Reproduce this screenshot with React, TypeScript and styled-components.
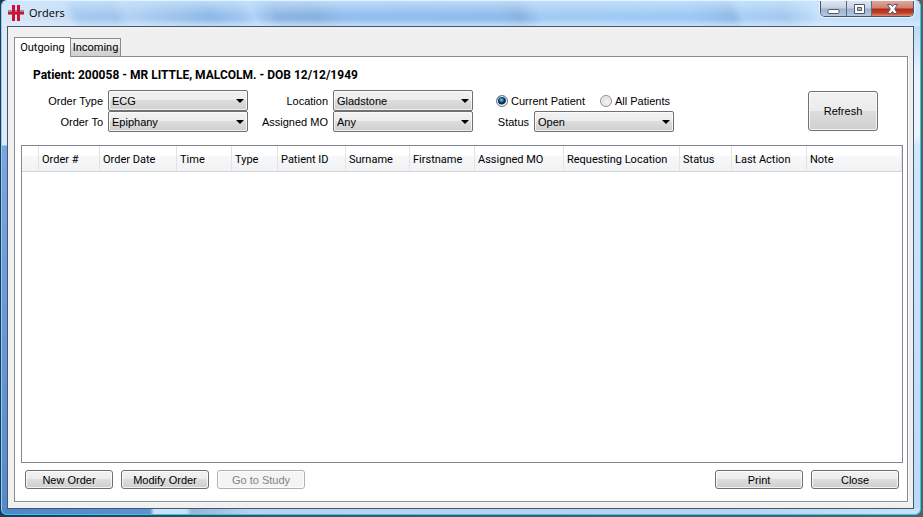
import React, { useId, useState } from "react";
import styled, { createGlobalStyle } from "styled-components";

const ui = `"Liberation Sans", Arial, sans-serif`;
const compact = `Roboto, Tahoma, sans-serif`;

const GlobalStyle = createGlobalStyle`
  *, *::before, *::after { box-sizing: border-box; }
  html, body, #root { height: 100%; }
  body {
    margin: 0;
    overflow: hidden;
    font: 11px/16px ${ui};
    color: #000;
    background: linear-gradient(90deg, #1f3a5c 0, #4a5258 30%, #5c5f60 100%);
  }
`;

const Window = styled.div`
  display: flex;
  flex-direction: column;
  height: calc(100vh - 2px);
  margin: 0 2px 0 1px;
  padding: 0 6px 5px 5px;
  border: 1px solid #23cdf5;
  border-top-color: #e4f2ff;
  border-left-color: #8fd0f0;
  border-radius: 6px;
  background:
    linear-gradient(90deg, #4f86c6 0, #5a92d2 148px, #c5e4fb 152px, #c5e4fb 184px, #93b6d8 190px, #b4d4f2 250px, #b4d4f2 80%, #c5e4fb 100%) 0 100% / 100% 6px no-repeat,
    linear-gradient(180deg, #dceaf8 0, #dceaf8 120px, #7aa6e0 121px, #5488c8 100%) 0 24px / 6px 100% no-repeat,
    linear-gradient(180deg, #b9d9f6 0, #eaf4fd 50px, #eaf4fd 110px, #cfe7ff 121px, #b9d9f6 100%) 100% 24px / 7px 100% no-repeat,
    #a9cff5;
`;

const TitleBar = styled.header`
  display: flex;
  align-items: flex-start;
  height: 25px;
  flex: none;
  margin: 0 -6px 0 -5px;
  padding: 0 6px 0 5px;
  border-radius: 5px 5px 0 0;
  background:
    linear-gradient(180deg, rgba(205,232,255,.7) 0, rgba(200,228,255,0) 14px, rgba(255,255,255,0) 18px, rgba(225,240,255,.6) 100%),
    linear-gradient(70deg, #dbe9f8 0, #c9ddf4 64px, #a9c9ee 74px, #a4c6ed 110px, #b4d2f2 122px, #8fb9e8 200px, #a2c6ee 228px, #b0d3f7 240px, #8fb6e2 262px, #8ab3e0 300px, #94bfee 326px, #90bcec 470px, #8cb4e0 490px, #a3cbf4 510px, #9fc9f4 650px, #93bbe6 690px, #aad0f5 700px, #a5c9ee 740px, #c5e0fa 770px, #c4defa 100%);
`;

const AppIcon = styled.svg`
  width: 16px;
  height: 16px;
  margin: 4px 5px 0 1px;
`;

const Title = styled.h1`
  flex: 1;
  margin: 3px 0 0;
  font: 11px/18px "Open Sans", sans-serif;
`;

const Caption = styled.div`
  display: flex;
  height: 16px;
  border: 1px solid #4a5568;
  border-top: 0;
  border-radius: 0 0 5px 5px;
  overflow: hidden;
  box-shadow: 0 0 1px 1px rgba(255,255,255,.6);
`;

const CaptionButton = styled.button<{ $close?: boolean }>`
  display: flex;
  align-items: center;
  justify-content: center;
  width: ${(p) => (p.$close ? 42 : 25)}px;
  padding: 0;
  border: 0;
  background: ${(p) =>
    p.$close
      ? "linear-gradient(180deg, #e0a79c 0, #d08070 7px, #b02a18 8px, #c2402a 12px, #dd8e70 100%)"
      : "linear-gradient(180deg, #dbe6f2 0, #c4d3e4 7px, #9db3ce 8px, #b4c9e0 100%)"};
  & + & { border-left: 1px solid #5a6a80; }
`;

const Client = styled.main`
  flex: 1;
  display: flex;
  flex-direction: column;
  min-height: 0;
  padding: 10px 5px 6px 6px;
  border: 1px solid #46566c;
  background: #f0f0f0;
`;

const TabList = styled.div`
  display: flex;
  align-items: flex-end;
  height: 19px;
  flex: none;
`;

const Tab = styled.button<{ $active?: boolean }>`
  position: relative;
  height: ${(p) => (p.$active ? 20 : 18)}px;
  width: ${(p) => (p.$active ? 57 : 51)}px;
  margin: ${(p) => (p.$active ? "0 0 -1px" : "0 0 0 -1px")};
  z-index: ${(p) => (p.$active ? 1 : 0)};
  padding: 0;
  border: 1px solid #898c95;
  border-bottom: 0;
  background: ${(p) => (p.$active ? "#fff" : "linear-gradient(180deg, #f2f2f2 0, #ebebeb 50%, #dcdcdc 50%, #cfcfcf 100%)")};
  font: 11px/18px ${compact};
  color: #000;
`;

const Panel = styled.section`
  flex: 1;
  display: flex;
  flex-direction: column;
  min-height: 0;
  padding: 10px 4px 12px 6px;
  border: 1px solid #898c95;
  background: #fff;
  box-shadow: 1px 1px 0 #fafafa;
`;

const Patient = styled.h2`
  margin: 0 0 7px 12px;
  font: bold 12px/16px ${compact};
`;

const Filters = styled.form`
  display: flex;
  align-items: flex-start;
  margin: 0 25px 13px 0;
`;

const FieldGrid = styled.div<{ $label: number }>`
  display: grid;
  grid-template-columns: ${(p) => p.$label}px 140px;
  grid-auto-rows: 21px;
  column-gap: 5px;
  align-items: center;
`;

const FieldLabel = styled.label`
  text-align: right;
  white-space: nowrap;
`;

const SelectBox = styled.div`
  display: grid;
  align-items: center;
  & > * { grid-area: 1 / 1; }
  & > svg { justify-self: end; margin-right: 4px; pointer-events: none; }
`;

const bevel = "linear-gradient(180deg, #f2f2f2 0, #ebebeb 50%, #dddddd 50%, #cfcfcf 100%)";

const Select = styled.select`
  appearance: none;
  width: 100%;
  height: 21px;
  padding: 0 16px 0 3px;
  border: 1px solid #707070;
  border-radius: 2px;
  background: ${bevel};
  box-shadow: inset 0 0 0 1px rgba(255,255,255,.7);
  font: 11px/16px ${ui};
  color: #000;
`;

const Radios = styled.div`
  grid-column: 1 / -1;
  display: flex;
  gap: 15px;
  padding-left: 23px;
`;

const RadioLabel = styled.label`
  display: flex;
  align-items: center;
  gap: 3px;
  white-space: nowrap;
`;

const Radio = styled.input`
  appearance: none;
  width: 12px;
  height: 12px;
  margin: 0;
  border: 1px solid #8a8f94;
  border-radius: 50%;
  background: radial-gradient(circle at 60% 60%, #f6f6f6 0, #d4d6d8 80%);
  box-shadow: inset 0 0 0 1px #f4f4f4;
  &:checked {
    border-color: #6c7a86;
    background: radial-gradient(circle at 45% 40%, #7fd0f0 0, #1c6fa0 2px, #0b2c4c 3px, #0b2c4c 4px, #dfe5ea 5px);
  }
`;

const Button = styled.button<{ $large?: boolean }>`
  width: ${(p) => (p.$large ? 70 : 88)}px;
  height: ${(p) => (p.$large ? 40 : 19)}px;
  padding: 0;
  border: 1px solid #707070;
  border-radius: 3px;
  background: ${bevel};
  box-shadow: inset 0 0 0 1px rgba(255,255,255,.75);
  font: 11px/16px ${ui};
  color: #000;
  &:disabled { border-color: #adb2b5; background: #f4f4f4; color: #838383; }
`;

const Refresh = styled(Button)`
  margin: 1px 0 0 auto;
`;

const ListView = styled.div`
  flex: 1;
  min-height: 0;
  border: 1px solid #828790;
  background: #fff;
`;

const Table = styled.table`
  width: 100%;
  table-layout: fixed;
  border-collapse: separate;
  border-spacing: 0;
`;

const HeadCell = styled.th<{ $w?: number }>`
  width: ${(p) => (p.$w ? `${p.$w}px` : "auto")};
  height: 26px;
  padding: 3px 0 0 3px;
  border-right: 1px solid #e2e3ea;
  border-bottom: 1px solid #d5d5d5;
  background: linear-gradient(180deg, #fff 0, #fff 9px, #f7f8fa 10px, #f1f2f4 100%);
  font: 11px/16px ${compact};
  text-align: left;
  white-space: nowrap;
`;

const Footer = styled.footer`
  display: flex;
  gap: 8px;
  margin: 7px 4px 0;
`;

const Spacer = styled.div`
  flex: 1;
`;

const columns: [string, number?][] = [
  ["", 17], ["Order #", 61], ["Order Date", 77], ["Time", 55], ["Type", 46],
  ["Patient ID", 68], ["Surname", 64], ["Firstname", 65], ["Assigned MO", 89],
  ["Requesting Location", 116], ["Status", 52], ["Last Action", 75], ["Note"],
];

function Field({ label, options }: { label: string; options: string[] }) {
  const id = useId();
  return (
    <>
      <FieldLabel htmlFor={id}>{label}</FieldLabel>
      <SelectBox>
        <Select id={id}>
          {options.map((o) => <option key={o}>{o}</option>)}
        </Select>
        <svg width="8" height="4" viewBox="0 0 8 4" aria-hidden="true">
          <path d="M0 0h8L4 4z" fill="#000" />
        </svg>
      </SelectBox>
    </>
  );
}

export default function App() {
  const [scope, setScope] = useState("current");
  return (
    <>
      <GlobalStyle />
      <Window>
        <TitleBar>
          <AppIcon viewBox="0 0 16 16" aria-hidden="true">
            <path d="M0 5h16v5H0z" fill="#a08a94" />
            <path d="M4 0h3v16H4zM9 0h3v16H9z" fill="#d0103a" />
            <path d="M0 7h16v2H0z" fill="#d0103a" />
          </AppIcon>
          <Title>Orders</Title>
          <Caption>
            <CaptionButton aria-label="Minimize">
              <svg width="13" height="14" viewBox="0 0 13 14">
                <rect x="1" y="7.500" width="11" height="4" rx="1" fill="#fff" stroke="#535666" />
              </svg>
            </CaptionButton>
            <CaptionButton aria-label="Maximize">
              <svg width="13" height="14" viewBox="0 0 13 14">
                <path d="M1.500 2.500h10v9h-10z" fill="#fff" stroke="#535666" />
                <path d="M4.500 5.500h4v3h-4z" fill="#a9bdd5" stroke="#535666" />
              </svg>
            </CaptionButton>
            <CaptionButton $close aria-label="Close window">
              <svg width="13" height="14" viewBox="0 0 13 14">
                <path d="M1.500 2.500h3.500l1.500 2 1.500-2h3.500L8.700 7l2.800 4.500H8l-1.500-2-1.500 2H1.500L4.300 7z" fill="#fff" stroke="#535666" />
              </svg>
            </CaptionButton>
          </Caption>
        </TitleBar>
        <Client>
          <TabList role="tablist">
            <Tab role="tab" aria-selected $active>Outgoing</Tab>
            <Tab role="tab" aria-selected={false}>Incoming</Tab>
          </TabList>
          <Panel>
            <Patient>Patient: 200058 - MR LITTLE, MALCOLM. - DOB 12/12/1949</Patient>
            <Filters onSubmit={(e) => e.preventDefault()}>
              <FieldGrid $label={82}>
                <Field label="Order Type" options={["ECG"]} />
                <Field label="Order To" options={["Epiphany"]} />
              </FieldGrid>
              <FieldGrid $label={80}>
                <Field label="Location" options={["Gladstone"]} />
                <Field label="Assigned MO" options={["Any"]} />
              </FieldGrid>
              <FieldGrid $label={56}>
                <Radios>
                  <RadioLabel>
                    <Radio type="radio" name="scope" checked={scope === "current"} onChange={() => setScope("current")} />
                    Current Patient
                  </RadioLabel>
                  <RadioLabel>
                    <Radio type="radio" name="scope" checked={scope === "all"} onChange={() => setScope("all")} />
                    All Patients
                  </RadioLabel>
                </Radios>
                <Field label="Status" options={["Open"]} />
              </FieldGrid>
              <Refresh $large type="button">Refresh</Refresh>
            </Filters>
            <ListView>
              <Table>
                <thead>
                  <tr>
                    {columns.map(([name, w], i) => <HeadCell key={i} scope="col" $w={w}>{name}</HeadCell>)}
                  </tr>
                </thead>
              </Table>
            </ListView>
            <Footer>
              <Button>New Order</Button>
              <Button>Modify Order</Button>
              <Button disabled>Go to Study</Button>
              <Spacer />
              <Button>Print</Button>
              <Button>Close</Button>
            </Footer>
          </Panel>
        </Client>
      </Window>
    </>
  );
}
